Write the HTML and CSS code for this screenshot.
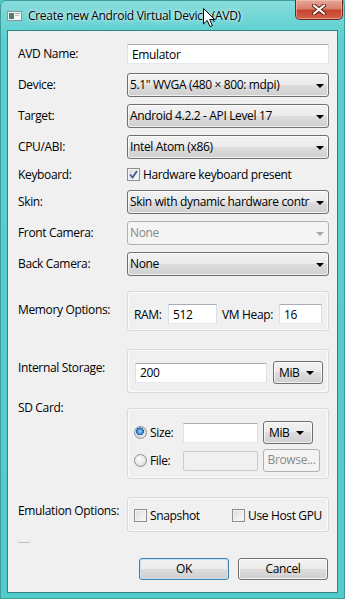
FILE: index.html
```html
<!DOCTYPE html>
<html lang="en">
<head>
    <meta charset="UTF-8">
    <title>Create new Android Virtual Device (AVD)</title>
    <link rel="stylesheet" href="styles.css">
</head>
<body>
    <div class="window">
        <div class="titlebar">
            <svg class="app-icon" width="15" height="10" viewBox="0 0 15 10">
                <rect x="0.5" y="0.5" width="14" height="9" fill="#f4f6f6" stroke="#8a9696"/>
                <rect x="2" y="2" width="5" height="6" fill="#4f7f6a"/>
                <rect x="8" y="2" width="5" height="1" fill="#9aa6a6"/>
                <rect x="8" y="4" width="4" height="1" fill="#b6c0c0"/>
            </svg>
            <span class="title">Create new Android Virtual Device (AVD)</span>
            <div class="close-btn">
                <svg width="14" height="11" viewBox="0 0 14 11">
                    <path d="M2 1.5 L12 9.5 M12 1.5 L2 9.5" stroke="#5a1d14" stroke-width="4" stroke-linecap="round"/>
                    <path d="M2 1.5 L12 9.5 M12 1.5 L2 9.5" stroke="#ffffff" stroke-width="2.2" stroke-linecap="round"/>
                </svg>
            </div>
        </div>

        <div class="client">
            <div class="row">
                <span class="label">AVD Name:</span>
                <input class="text wide" type="text" value="Emulator">
            </div>
            <div class="row">
                <span class="label">Device:</span>
                <div class="combo wide">5.1" WVGA (480 × 800: mdpi)</div>
            </div>
            <div class="row">
                <span class="label">Target:</span>
                <div class="combo wide">Android 4.2.2 - API Level 17</div>
            </div>
            <div class="row">
                <span class="label">CPU/ABI:</span>
                <div class="combo wide">Intel Atom (x86)</div>
            </div>
            <div class="row row-check">
                <span class="label">Keyboard:</span>
                <span class="check checked">
                    <svg width="9" height="9" viewBox="0 0 9 9">
                        <path d="M1 4.5 L3.5 7.5 L8 1" fill="none" stroke="#3d5a9a" stroke-width="1.8"/>
                    </svg>
                </span>
                <span class="check-text">Hardware keyboard present</span>
            </div>
            <div class="row">
                <span class="label">Skin:</span>
                <div class="combo wide">Skin with dynamic hardware contr</div>
            </div>
            <div class="row">
                <span class="label">Front Camera:</span>
                <div class="combo wide disabled">None</div>
            </div>
            <div class="row">
                <span class="label">Back Camera:</span>
                <div class="combo wide">None</div>
            </div>

            <!-- memory -->
            <div class="grouprow memory-row">
                <span class="label">Memory Options:</span>
                <div class="group memory">
                    <span class="ram-label">RAM:</span>
                    <input class="text ram" type="text" value="512">
                    <span class="heap-label">VM Heap:</span>
                    <input class="text heap" type="text" value="16">
                </div>
            </div>

            <div class="grouprow storage-row">
                <span class="label">Internal Storage:</span>
                <div class="group storage">
                    <input class="text storage-input" type="text" value="200">
                    <div class="combo unit">MiB</div>
                </div>
            </div>

            <div class="grouprow sd-row">
                <span class="label">SD Card:</span>
                <div class="group sd">
                    <div class="sd-line size-line">
                        <span class="radio-box"><span class="radio selected"></span>Size:</span>
                        <input class="text sd-input" type="text" value="">
                        <div class="combo unit">MiB</div>
                    </div>
                    <div class="sd-line file-line">
                        <span class="radio-box"><span class="radio"></span>File:</span>
                        <input class="text sd-input" type="text" value="" disabled>
                        <div class="button browse">Browse...</div>
                    </div>
                </div>
            </div>

            <div class="grouprow emu-row">
                <span class="label">Emulation Options:</span>
                <div class="group emu">
                    <span class="emu-item first"><span class="check"></span>Snapshot</span>
                    <span class="emu-item"><span class="check"></span>Use Host GPU</span>
                </div>
            </div>

            <div class="sep"></div>

            <div class="buttons">
                <div class="button default">OK</div>
                <div class="button">Cancel</div>
            </div>
        </div>

        <svg class="cursor" width="13" height="20" viewBox="0 0 13 20">
            <path d="M0.5 0.5 L0.5 16 L4.2 12.4 L7 18.6 L9.4 17.6 L6.7 11.5 L11.6 11.5 Z" fill="#ffffff" stroke="#000000" stroke-width="1" stroke-linejoin="round"/>
        </svg>
    </div>
</body>
</html>
```

FILE: styles.css
```css
* {
    box-sizing: border-box;
}

html, body {
    margin: 0;
    padding: 0;
}

body {
    width: 345px;
    height: 599px;
    overflow: hidden;
    font-family: "Open Sans", sans-serif;
    font-size: 12px;
    letter-spacing: -0.35px;
    color: #000;
    background: #4fc9c9;
}

.window {
    position: relative;
    width: 345px;
    height: 599px;
    display: flex;
    flex-direction: column;
    background: linear-gradient(180deg, #8adcdc 0, #6ed5d5 18px, #5acfcf 40px, #52cbcb 100%);
    border: 1px solid #3f9c9c;
    border-radius: 6px 6px 0 0;
}

/* title bar */

.titlebar {
    position: relative;
    height: 29px;
    display: flex;
    align-items: center;
    padding-left: 6px;
    flex-shrink: 0;
}

.app-icon {
    margin-right: 6px;
    margin-top: 1px;
}

.title {
    font-size: 12px;
    letter-spacing: -0.3px;
    color: #000;
    text-shadow: 0 0 6px rgba(255, 255, 255, 0.9), 0 0 2px rgba(255, 255, 255, 0.8);
}

.close-btn {
    position: absolute;
    top: -1px;
    right: 1px;
    width: 48px;
    height: 20px;
    display: flex;
    align-items: center;
    justify-content: center;
    border: 1px solid #6a2a22;
    border-top: none;
    border-radius: 0 0 5px 5px;
    background: linear-gradient(180deg, #e8a898 0, #d9806c 45%, #c7452e 55%, #d4614a 100%);
    box-shadow: inset 0 0 0 1px rgba(255, 200, 190, 0.5);
}

/* client area */

.client {
    flex: 1;
    margin: 0 6px 5px 6px;
    padding: 11px 8px 0 10px;
    background: #f0f0f0;
    border: 1px solid #2e8384;
    display: flex;
    flex-direction: column;
}

.row {
    display: flex;
    align-items: center;
    height: 24px;
    margin-bottom: 7px;
    flex-shrink: 0;
}

.row-check {
    height: 17px;
}

.label {
    width: 109px;
    flex-shrink: 0;
    line-height: 16px;
}

.wide {
    width: 202px;
}

/* inputs */

.text {
    height: 20px;
    padding: 0 4px;
    font-family: "Open Sans", sans-serif;
    font-size: 12px;
    letter-spacing: -0.35px;
    color: #000;
    background: #fff;
    border: 1px solid #dbdfe6;
    border-top-color: #abadb3;
    border-bottom-color: #e3e9ef;
    border-radius: 0;
    outline: none;
}

.text:disabled {
    background: #f0f0f0;
    border-color: #c9cbcf;
    border-radius: 2px;
}

.combo {
    position: relative;
    height: 24px;
    line-height: 22px;
    padding: 0 16px 0 2px;
    white-space: nowrap;
    overflow: hidden;
    border: 1px solid #707070;
    border-radius: 3px;
    background: linear-gradient(180deg, #f2f2f2 0, #ebebeb 50%, #dddddd 50%, #cfcfcf 100%);
    box-shadow: inset 0 0 0 1px rgba(255, 255, 255, 0.7);
}

.combo::after {
    content: '';
    position: absolute;
    right: 4px;
    top: 10px;
    width: 0;
    height: 0;
    border-left: 4px solid transparent;
    border-right: 4px solid transparent;
    border-top: 4px solid #000;
}

.combo.disabled {
    color: #8a8a8a;
    border-color: #adb2b5;
    background: #f4f4f4;
    box-shadow: none;
}

.combo.disabled::after {
    border-top-color: #a8a8a8;
}

/* checkbox and radio */

.check {
    width: 13px;
    height: 13px;
    flex-shrink: 0;
    display: inline-flex;
    align-items: center;
    justify-content: center;
    border: 1px solid #8e8f8f;
    background: linear-gradient(135deg, #d8dbe0 0, #f2f2f2 70%, #fafafa 100%);
    box-shadow: inset 0 0 0 1px #f4f4f4;
}

.check-text {
    margin-left: 3px;
}

.radio {
    display: inline-block;
    width: 13px;
    height: 13px;
    border-radius: 50%;
    border: 1px solid #8e8f8f;
    background: radial-gradient(circle at 40% 35%, #fdfdfd 0, #e6e6e6 55%, #c9cdd2 100%);
    margin-right: 3px;
    flex-shrink: 0;
}

.radio.selected {
    background: radial-gradient(circle at 45% 40%, #a6dcff 0, #3e8ed6 28%, #1b5c9c 42%, #d6dadf 46%, #f5f5f5 100%);
}

/* group boxes */

.grouprow {
    display: flex;
    align-items: flex-start;
    flex-shrink: 0;
}

.group {
    width: 202px;
    border: 1px solid #d5d8dc;
    border-radius: 3px;
    box-shadow: inset 0 0 0 1px #fbfbfb;
}

.memory-row {
    margin-top: 8px;
    margin-bottom: 18px;
}

.memory-row .label {
    padding-top: 11px;
}

.memory {
    display: flex;
    align-items: center;
    padding: 12px 6px 6px 6px;
}

.ram-label {
    width: 34px;
}

.ram {
    width: 49px;
}

.heap-label {
    width: 57px;
    margin-left: 5px;
}

.heap {
    width: 43px;
}

.storage-row {
    margin-bottom: 15px;
}

.storage-row .label {
    padding-top: 11px;
}

.storage {
    display: flex;
    align-items: center;
    padding: 11px 5px 8px 7px;
}

.storage-input {
    width: 132px;
    margin-right: 6px;
}

.unit {
    width: 50px;
    height: 23px;
    line-height: 21px;
    padding-left: 5px;
}

.unit::after {
    top: 9px;
    right: 8px;
}

.sd-row {
    margin-bottom: 18px;
}

.sd-row .label {
    margin-top: -8px;
}

.sd {
    padding: 11px 8px 6px 6px;
}

.sd-line {
    display: flex;
    align-items: center;
}

.size-line {
    height: 25px;
    margin-bottom: 4px;
}

.file-line {
    height: 23px;
}

.radio-box {
    width: 49px;
    display: flex;
    align-items: center;
}

.sd-input {
    width: 75px;
    margin-right: 5px;
}

.emu {
    display: flex;
    align-items: center;
    height: 35px;
    padding: 1px 6px 0 6px;
}

.emu-row .label {
    padding-top: 6px;
}

.emu-item {
    display: flex;
    align-items: center;
    white-space: nowrap;
}

.emu-item.first {
    width: 99px;
}

.emu-item .check {
    margin-right: 3px;
}

.sep {
    width: 12px;
    height: 1px;
    margin-top: 10px;
    background: #c2c2c2;
    flex-shrink: 0;
}

/* buttons */

.buttons {
    display: flex;
    justify-content: flex-end;
    gap: 9px;
    margin-top: 15px;
    margin-right: 1px;
}

.button {
    width: 90px;
    height: 22px;
    line-height: 20px;
    text-align: center;
    border: 1px solid #707070;
    border-radius: 3px;
    background: linear-gradient(180deg, #f2f2f2 0, #ebebeb 50%, #dddddd 50%, #cfcfcf 100%);
    box-shadow: inset 0 0 0 1px rgba(255, 255, 255, 0.75);
}

.button.default {
    border-color: #3c7fb1;
    box-shadow: inset 0 0 0 1px #c5e4f7;
}

.button.browse {
    width: 57px;
    height: 23px;
    color: #8a8a8a;
    border-color: #adb2b5;
    background: #f4f4f4;
    box-shadow: none;
}

.cursor {
    position: absolute;
    left: 202px;
    top: 7px;
}
```
